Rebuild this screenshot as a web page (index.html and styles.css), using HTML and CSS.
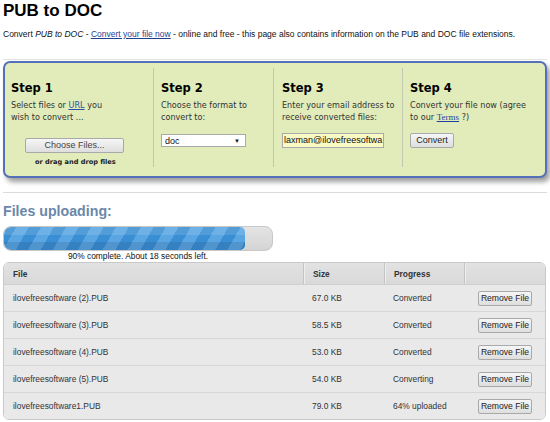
FILE: index.html
```html
<!DOCTYPE html>
<html>
<head>
<meta charset="utf-8">
<link rel="stylesheet" href="styles.css">
</head>
<body>
<h1 class="title">PUB to DOC</h1>
<p class="intro">Convert <em>PUB to DOC</em> - <a href="#">Convert your file now</a> - online and free - this page also contains information on the PUB and DOC file extensions.</p>

<div class="band">
  <div class="panel">
    <div class="step s1">
      <h2>Step 1</h2>
      <p>Select files or <a href="#">URL</a> you<br>wish to convert ...</p>
      <div class="center"><span class="btn choose">Choose Files...</span></div>
      <div class="drag">or drag and drop files</div>
    </div>
    <div class="step s2">
      <h2>Step 2</h2>
      <p>Choose the format to<br>convert to:</p>
      <div class="select"><span>doc</span><span class="arrow">▼</span></div>
    </div>
    <div class="step s3">
      <h2>Step 3</h2>
      <p>Enter your email address to<br>receive converted files:</p>
      <div class="email">laxman@ilovefreesoftwa</div>
    </div>
    <div class="step s4">
      <h2>Step 4</h2>
      <p>Convert your file now (agree<br>to our <a class="terms" href="#">Terms</a> ?)</p>
      <span class="btn convert">Convert</span>
    </div>
  </div>
</div>

<h3 class="uploading">Files uploading:</h3>
<div class="progress-wrap">
  <div class="progress"><div class="fill" style="width:90%"></div></div>
  <div class="progress-text">90% complete. About 18 seconds left.</div>
</div>

<div class="files">
  <div class="row head">
    <div class="c file">File</div>
    <div class="c size">Size</div>
    <div class="c prog">Progress</div>
    <div class="c act"></div>
  </div>
  <div class="row">
    <div class="c file">ilovefreesoftware (2).PUB</div>
    <div class="c size">67.0 KB</div>
    <div class="c prog">Converted</div>
    <div class="c act"><span class="btn remove">Remove File</span></div>
  </div>
  <div class="row">
    <div class="c file">ilovefreesoftware (3).PUB</div>
    <div class="c size">58.5 KB</div>
    <div class="c prog">Converted</div>
    <div class="c act"><span class="btn remove">Remove File</span></div>
  </div>
  <div class="row">
    <div class="c file">ilovefreesoftware (4).PUB</div>
    <div class="c size">53.0 KB</div>
    <div class="c prog">Converted</div>
    <div class="c act"><span class="btn remove">Remove File</span></div>
  </div>
  <div class="row">
    <div class="c file">ilovefreesoftware (5).PUB</div>
    <div class="c size">54.0 KB</div>
    <div class="c prog">Converting</div>
    <div class="c act"><span class="btn remove">Remove File</span></div>
  </div>
  <div class="row last">
    <div class="c file">ilovefreesoftware1.PUB</div>
    <div class="c size">79.0 KB</div>
    <div class="c prog">64% uploaded</div>
    <div class="c act"><span class="btn remove">Remove File</span></div>
  </div>
</div>
</body>
</html>
```

FILE: styles.css
```css
* { box-sizing: border-box; }
body {
  margin: 0;
  padding: 0 3px;
  background: #fff;
  font-family: "Liberation Sans", Arial, sans-serif;
  color: #111;
  width: 550px;
  height: 422px;
  overflow: hidden;
}
.title {
  margin: 1px 0 0 0;
  font-size: 17px;
  line-height: 20px;
  font-weight: bold;
  color: #000;
}
.intro {
  margin: 7px 0 0 0;
  font-size: 8.5px;
  line-height: 12px;
  color: #111;
}
.intro em { font-style: italic; }
.intro a { color: #1f3f8f; }

.band {
  margin-top: 19px;
  width: 544px;
  border-top: 1px solid #e3e3e3;
  border-bottom: 1px solid #dcdcdc;
  padding: 1px 0 14px 0;
}
.panel {
  height: 117px;
  background: #e1ecba;
  border: 2px solid #5470b8;
  border-radius: 7px;
  box-shadow: 3px 4px 5px rgba(0,0,0,0.38);
  display: grid;
  grid-template-columns: 148px 120px 129px 1fr;
  padding: 5px 0 10px 0;
  font-family: "DejaVu Sans", Verdana, sans-serif;
}
.step {
  padding: 13px 0 0 7px;
  border-left: 1px solid #c2c7b0;
}
.step.s1 { border-left: none; padding-left: 6px; }
.step.s3 { padding-left: 8px; }
.step h2 {
  margin: 0;
  font-size: 11.5px;
  line-height: 14px;
  font-weight: bold;
  color: #000;
}
.step p {
  margin: 4px 0 0 0;
  font-size: 8.1px;
  line-height: 12px;
  color: #333;
}
.step a { color: #2b52a3; }
.step a.terms { font-family: "Liberation Serif", "Times New Roman", serif; font-size: 9px; color: #1f3fa0; }

.btn {
  display: inline-block;
  font-family: "Liberation Sans", Arial, sans-serif;
  font-size: 9px;
  color: #222;
  background: linear-gradient(#f6f6f6, #dedede);
  border: 1px solid #a9a9a9;
  border-radius: 2px;
  text-align: center;
}
.center { padding-right: 8px; }
.s1 .center { margin-top: 10px; padding-left: 14px; }
.choose {
  width: 99px;
  height: 15px;
  line-height: 13px;
  color: #444;
}
.drag {
  margin-top: 4px;
  padding-left: 24px;
  font-size: 6.6px;
  line-height: 10px;
  font-weight: bold;
  color: #222;
}
.select {
  margin-top: 11px;
  width: 85px;
  height: 13px;
  background: #fff;
  border: 1px solid #a9a9a9;
  display: flex;
  justify-content: space-between;
  align-items: center;
  padding: 0 5px 0 3px;
  font-family: "Liberation Sans", Arial, sans-serif;
  font-size: 9px;
  color: #111;
}
.select .arrow { font-size: 6px; }
.email {
  margin-top: 10px;
  width: 102px;
  height: 15px;
  background: #fafac4;
  border: 1px solid #a9a9a9;
  font-family: "Liberation Sans", Arial, sans-serif;
  font-size: 9px;
  line-height: 13px;
  padding-left: 1px;
  color: #111;
  overflow: hidden;
  white-space: nowrap;
}
.convert {
  margin-top: 10px;
  width: 44px;
  height: 15px;
  line-height: 13px;
}

.uploading {
  margin: 9px 0 0 0;
  font-size: 14.2px;
  line-height: 18px;
  font-weight: bold;
  color: #6b88aa;
}
.progress-wrap { width: 270px; margin-top: 6px; }
.progress {
  height: 25px;
  border-radius: 8px;
  background: linear-gradient(#e4e4e4, #d4d4d4);
  border: 1px solid #c8c8c8;
  overflow: hidden;
}
.fill {
  height: 100%;
  border-radius: 7px 5px 5px 7px;
  background:
    linear-gradient(rgba(255,255,255,0.12) 0 34%, rgba(255,255,255,0) 34% 67%, rgba(0,0,40,0.10) 67% 100%),
    repeating-linear-gradient(120deg, #3a8ed3 0 10.5px, #5aa6e2 10.5px 21.6px);
}
.progress-text {
  text-align: center;
  font-size: 8.4px;
  line-height: 11px;
  color: #111;
}

.files {
  margin-top: 0px;
  width: 543px;
  border: 1px solid #c9c9c9;
  border-radius: 6px;
  overflow: hidden;
  font-size: 8.4px;
  color: #333;
}
.row {
  display: grid;
  grid-template-columns: 299px 81px 80px 1fr;
  height: 27px;
  background: #e9e9e9;
  border-bottom: 1px solid #d7d7d7;
  align-items: center;
}
.row.last { border-bottom: none; height: 26px; }
.row.head {
  height: 22px;
  background: linear-gradient(#e2e2e2, #d9d9d9);
  border-bottom: 1px solid #cfcfcf;
  font-weight: bold;
  color: #333;
  align-items: stretch;
}
.row.head .c { display: flex; align-items: center; }
.row.head .c + .c { border-left: 1px solid #c4c4c4; box-shadow: inset 1px 0 0 #eeeeee; }
.c { padding-left: 9px; }
.row:not(.head) .c + .c { padding-left: 9px; }
.act { padding-left: 14px !important; }
.remove {
  width: 54px;
  height: 15px;
  line-height: 13px;
  font-size: 8.6px;
  color: #222;
}
```
